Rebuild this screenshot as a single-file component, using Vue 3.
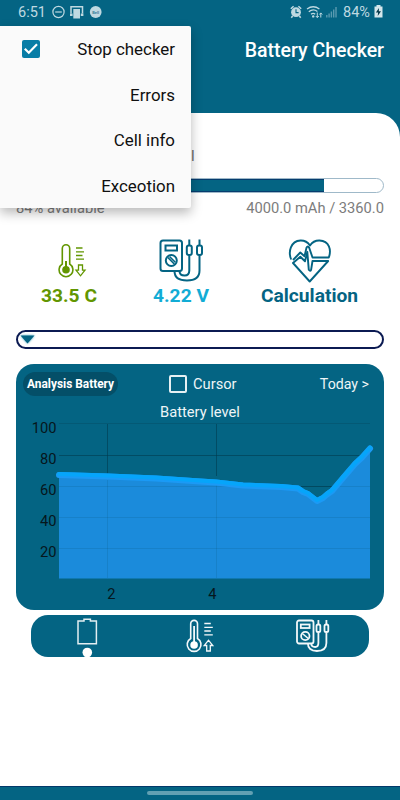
<script setup>
import { ref } from 'vue';

const stopChecker = ref(true)
const level = ref(84)

const menuItems = ['Errors', 'Cell info', 'Exceotion']

const gridRows = [
    { label: '100', y: 8.5 },
    { label: '80', y: 39.5 },
    { label: '60', y: 70.5 },
    { label: '40', y: 101.5 },
    { label: '20', y: 132.5 }
]

const gridCols = [
    { label: '2', x: 91.5, textX: 95.5 },
    { label: '4', x: 200.5, textX: 196.5 }
]

const points = '43,59 92,60.5 140,62.5 184,65.5 200,66.5 227,69.5 265,71 282,72.5 287,76 292,78 301,85 307,82 311,78.5 316,75 327,62 339,48 346,41.5 354,32.5'
</script>

<template>
    <div class="screen">
        <div class="status-bar">
            <span class="status-time">6:51</span>
            <svg class="status-left" width="52" height="14" viewBox="0 0 52 14">
                <g fill="none" stroke="#bfd9e1" stroke-width="1.2">
                    <circle cx="6.5" cy="7" r="5.6" />
                    <path d="M3.2 7h6.6" />
                </g>
                <path d="M19 8.500V1.700h11.500v6.800" fill="none" stroke="#bfd9e1" stroke-width="1.500" />
                <path d="M21.300 4h6.700v9.500h-6.700z" fill="#bfd9e1" />
                <path d="M18 8.500h2.600v2.500H18zM28.800 8.500h2.600v2.500h-2.600z" fill="#bfd9e1" />
                <circle cx="43.700" cy="7" r="5.900" fill="#bfd9e1" />
                <text x="43.700" y="8.500" text-anchor="middle" font-size="4" font-weight="700" fill="#3d8299">Bell</text>
            </svg>
            <svg class="status-right" width="50" height="14" viewBox="0 0 50 14">
                <circle cx="6" cy="7.200" r="4.900" fill="#bfd9e1" />
                <path d="M.8 3.800 3.600 1.200M8.400 1.200l2.800 2.600M2.600 11 1.300 12.800M9.400 11l1.300 1.800" stroke="#bfd9e1" stroke-width="1.500" />
                <path d="M6 4.300v3.300h2.600" fill="none" stroke="#046483" stroke-width="1.100" />
                <g fill="none" stroke="#bfd9e1" stroke-width="1.300">
                    <path d="M17 4q6.200-4.500 12.400 0M18.800 6.800q4.400-3.600 8.600-.2M21 9.300q2.200-1.700 4.200 0" />
                    <path d="M27.300 7.500v5M25.800 11l1.500 1.600 1.500-1.600M30.800 12.500V8M29.400 9.500l1.400-1.600 1.400 1.600" stroke-width="1" />
                </g>
                <circle cx="23.200" cy="11.400" r="1.200" fill="#bfd9e1" />
                <path d="M36.800 10v2.500M39.100 8.500v4M41.400 6.500v6M43.700 4.500v8M46 2v10.500" stroke="#5a9ab0" stroke-width="1.400" />
            </svg>
            <span class="status-level">{{ level }}%</span>
            <svg width="9" height="13" viewBox="0 0 9 13">
                <path d="M2.500 0h4v1.500H8.500V12.500H.5V1.500h2z" fill="#d4e6eb" />
                <path d="M5 3 1.900 7.500h2.200L3.700 11 7 6.300H4.800z" fill="#05384a" />
            </svg>
        </div>

        <div class="app-bar">Battery Checker</div>

        <div class="sheet">
            <div class="level-title">l</div>
            <div class="level-bar">
                <div class="level-fill" :style="{ width: level + '%' }"></div>
            </div>
            <div class="level-info">
                <span>{{ level }}% available</span>
                <span>4000.0 mAh / 3360.0</span>
            </div>

            <div class="metrics">
                <div class="metric temperature">
                    <svg width="44" height="46" viewBox="0 0 44 46" fill="none" stroke="currentColor">
                        <path d="M15.300 26V10.500a3.700 3.700 0 0 1 7.400 0V26a6.900 6.900 0 1 1-7.400 0z" stroke-width="1.600" />
                        <path d="M19 23v9" stroke-width="2" />
                        <circle cx="19" cy="31.800" r="3.800" fill="currentColor" stroke="none" />
                        <path d="M29 10h6.500M29 13.800h8M29 17.500h6.500M29 21.200h8" stroke-width="1.300" />
                        <path d="M31.500 27h4v5.200H38l-4.500 5.600-4.500-5.600h2.500z" stroke-width="1.300" />
                    </svg>
                    <span>33.5 C</span>
                </div>
                <div class="metric voltage">
                    <svg width="44" height="46" viewBox="0 0 44 46" fill="none" stroke="#046483" stroke-width="2">
                        <rect x="1.500" y="2.500" width="21.500" height="30.500" rx="2.500" />
                        <rect x="6.500" y="7.500" width="11.500" height="5" />
                        <circle cx="12.300" cy="22.500" r="5.500" />
                        <path d="m8.800 19.500 6.500 6.500M10.500 18.500l5.800 5.800" stroke-width="1.600" />
                        <rect x="27.800" y="7.500" width="5" height="9.500" rx="2" />
                        <rect x="38" y="7.500" width="5" height="9.500" rx="2" />
                        <path d="M30.300 1.500v6M40.500 1.500v6M30.300 17v15.500q0 5-4.700 5-5.100 0-5.100-4.500M40.500 17v15.500q0 10-12.500 10T15.500 33" />
                    </svg>
                    <span>4.22 V</span>
                </div>
                <div class="metric calculation">
                    <svg width="44" height="46" viewBox="0 0 44 46" fill="none" stroke="currentColor" stroke-width="1.900" stroke-linejoin="round">
                        <path d="M3.200 21.500C0 14 2.500 3 12.500 2.500q6-.2 9.500 5Q25.500 2.300 31.500 2.500c10 .5 12 9.500 9.300 17H24.500L21.200 9.700q-1.500-2.500-2.700 0L16.500 18.300 12.300 14.500 5 22" />
                        <path d="m5 25 7.300-6.300 4.700 4.600 2.300-9.500 1.500 18q1.400 2 2.300 0l1.400-8.800h15.700L21.700 43.500z" />
                    </svg>
                    <span>Calculation</span>
                </div>
            </div>

            <div class="slider">
                <svg width="16" height="11" viewBox="0 0 16 11">
                    <path d="M.5 1.500h14L7.500 9.500z" fill="#046483" />
                </svg>
            </div>

            <div class="chart-card">
                <div class="chart-head">
                    <div class="analysis-btn">Analysis Battery</div>
                    <div class="cursor-check">
                        <span class="empty-box"></span>
                        <span>Cursor</span>
                    </div>
                    <div class="today">Today &gt;</div>
                </div>
                <div class="chart-title">Battery level</div>
                <svg class="chart" width="368" height="190" viewBox="0 0 368 190">
                    <polygon :points="`43,162.500 ${points} 354,162.500`" fill="#1b8bdb" />
                    <g stroke="#02384a" stroke-opacity="0.55" stroke-width="1">
                        <line x1="43" x2="354" y1="7.500" y2="7.500" stroke-opacity="0.25" />
                        <line x1="43" x2="347" y1="39.500" y2="39.500" />
                        <line x1="230" x2="318" y1="70.500" y2="70.500" />
                        <line v-for="col in gridCols" :key="col.label" :x1="col.x" :x2="col.x" y1="8" y2="60" />
                    </g>
                    <g stroke="#02384a" stroke-opacity="0.12" stroke-width="1">
                        <line v-for="row in gridRows.slice(2)" :key="row.label" x1="43" x2="354" :y1="row.y" :y2="row.y" />
                        <line v-for="col in gridCols" :key="col.label" :x1="col.x" :x2="col.x" y1="64" y2="162" />
                    </g>
                    <polyline class="line-base" :points="points" />
                    <polyline class="line-top" :points="points" transform="translate(0 -1)" />
                    <g class="axis-text">
                        <text v-for="row in gridRows" :key="row.label" x="40.500" :y="row.y + 8" text-anchor="end">{{ row.label }}</text>
                        <text v-for="col in gridCols" :key="col.label" :x="col.textX" y="182.500" text-anchor="middle">{{ col.label }}</text>
                    </g>
                </svg>
            </div>

            <div class="tabs">
                <div class="tab">
                    <svg width="22" height="42" viewBox="0 0 22 42">
                        <path d="M2 6h6V4.200h6.400V6h6v22.800H2z" fill="none" stroke="#e3eef2" stroke-width="1.500" />
                        <circle cx="11.300" cy="37.500" r="4.800" fill="#fff" />
                    </svg>
                </div>
                <div class="tab">
                    <svg width="30" height="42" viewBox="0 0 30 42" fill="none" stroke="#f3f8fa">
                        <path d="M5.700 23.500V8.800a3.400 3.400 0 0 1 6.800 0v14.700a6.900 6.900 0 1 1-6.800 0z" stroke-width="1.600" />
                        <path d="M9.100 11v19" stroke-width="1.800" />
                        <circle cx="9.100" cy="30" r="3.800" fill="#fff" stroke="none" />
                        <path d="M19.300 8.500h6.500M19.300 12.300h8.500M19.300 16h6.500M19.300 19.800h8.500" stroke-width="1.300" />
                        <path d="M21.700 36v-5.500h-2.500l4.300-5.300 4.300 5.300h-2.500V36z" stroke-width="1.300" />
                    </svg>
                </div>
                <div class="tab">
                    <svg width="34" height="42" viewBox="0 0 34 42" fill="none" stroke="#f3f8fa" stroke-width="1.800">
                        <rect x="1" y="5.500" width="16.500" height="23" rx="2" />
                        <rect x="4.800" y="9.500" width="8.800" height="3.500" />
                        <circle cx="9.300" cy="21" r="4.200" />
                        <path d="m6.300 18.500 6 5" stroke-width="1.600" />
                        <rect x="20.500" y="9.500" width="3.800" height="7.500" rx="1.600" />
                        <rect x="28.500" y="9.500" width="3.800" height="7.500" rx="1.600" />
                        <path d="M22.400 5v4M30.400 5v4M22.400 17v11q0 4-3.300 4-3.800 0-3.800-3.500M30.400 17v11q0 8-9.500 8-9 0-9-7.500" />
                    </svg>
                </div>
            </div>
        </div>

        <div class="nav-bar"><span></span></div>

        <div class="menu">
            <div class="menu-item">
                <span class="checked-box">
                    <svg v-if="stopChecker" width="18" height="18" viewBox="0 0 18 18">
                        <path d="M2.800 8.800l4 4 8.200-8.500" fill="none" stroke="#fff" stroke-width="2.200" />
                    </svg>
                </span>
                <span class="menu-label">Stop checker</span>
            </div>
            <div class="menu-item" v-for="item in menuItems" :key="item">
                <span></span>
                <span class="menu-label">{{ item }}</span>
            </div>
        </div>
    </div>
</template>

<style>
body {
    margin: 0;
}
</style>

<style scoped>
.screen {
    position: relative;
    box-sizing: border-box;
    width: 400px;
    height: 800px;
    overflow: hidden;
    display: flex;
    flex-direction: column;
    background: #046483;
    font-family: Roboto, "Liberation Sans", sans-serif;
}

.screen svg {
    display: block;
    flex: none;
}

.status-bar {
    display: flex;
    align-items: center;
    height: 23px;
    padding: 0 17px 0 18px;
    color: #bfd9e1;
    font-size: 14.500px;
}

.status-time,
.status-level {
    padding-top: 1px;
}

.status-time {
    width: 34px;
}

.status-right {
    margin-left: auto;
}

.status-level {
    width: 31px;
    margin-left: 3px;
}

.app-bar {
    height: 90px;
    padding-right: 16px;
    box-sizing: border-box;
    color: #fff;
    font-size: 19.500px;
    font-weight: 500;
    line-height: 56px;
    text-align: right;
}

.sheet {
    flex: 1;
    padding: 0 16px;
    background: #fff;
    border-radius: 0 24px 0 0;
}

.level-title {
    height: 65px;
    padding-left: 175px;
    color: #6c6c6c;
    font-size: 15px;
    line-height: 87px;
}

.level-bar {
    box-sizing: border-box;
    height: 15px;
    border: 1px solid #9fb9c9;
    border-radius: 8px;
    overflow: hidden;
}

.level-fill {
    box-sizing: border-box;
    height: 100%;
    background: #046483;
    border-bottom: 1px solid #063c6e;
    border-top: 1px solid #063c6e;
}

.level-info {
    display: flex;
    justify-content: space-between;
    height: 45px;
    color: #7c7c7c;
    font-size: 14.700px;
    line-height: 30px;
}

.metrics {
    display: grid;
    grid-template-columns: 106px 118px 139px;
    height: 92px;
}

.metric {
    display: flex;
    flex-direction: column;
    align-items: center;
    font-size: 19.200px;
    font-weight: 700;
    line-height: 22px;
}

.metric svg {
    margin-bottom: 1px;
}

.temperature {
    color: #629600;
}

.voltage {
    color: #12acd5;
}

.calculation {
    color: #046483;
}

.slider {
    box-sizing: border-box;
    display: flex;
    align-items: center;
    height: 19px;
    padding-left: 2px;
    border: 2px solid #0b1a52;
    border-radius: 10px;
}

.slider svg {
    filter: drop-shadow(0 0 1px #3aa0ba);
}

.chart-card {
    height: 246px;
    margin-top: 15px;
    background: #046483;
    border-radius: 18px;
    color: #eef5f7;
    font-size: 14.700px;
}

.chart-head {
    display: flex;
    align-items: center;
    height: 39px;
    padding: 0 15px 0 7px;
}

.analysis-btn {
    width: 95px;
    height: 24px;
    border-radius: 12px;
    background: #044f68;
    color: #fff;
    font-size: 11.900px;
    font-weight: 700;
    line-height: 24px;
    text-align: center;
    white-space: nowrap;
}

.cursor-check {
    display: flex;
    align-items: center;
    gap: 6px;
    margin-left: 51px;
    line-height: 20px;
}

.empty-box {
    box-sizing: border-box;
    width: 18px;
    height: 18px;
    border: 2px solid #e6f0f3;
    border-radius: 2px;
}

.today {
    margin-left: auto;
    font-size: 14.200px;
}

.chart-title {
    height: 13px;
    line-height: 18px;
    text-align: center;
}

.line-base,
.line-top {
    fill: none;
    stroke: #1b9af5;
    stroke-width: 6;
    stroke-linecap: round;
    stroke-linejoin: round;
}

.line-top {
    stroke: #06a5fa;
    stroke-width: 4;
}

.axis-text {
    fill: #06161c;
    font-size: 14.700px;
}

.tabs {
    display: grid;
    grid-template-columns: repeat(3, 1fr);
    height: 42px;
    margin: 5px 15px 0;
    background: #046483;
    border-radius: 17px;
}

.tab {
    display: flex;
    justify-content: center;
}

.nav-bar {
    box-sizing: border-box;
    display: flex;
    justify-content: center;
    height: 14px;
    padding-top: 4px;
    border-top: 1px solid #03396a;
}

.nav-bar span {
    width: 106px;
    height: 4px;
    border-radius: 2px;
    background: #62a0b3;
}

.menu {
    position: absolute;
    left: 0;
    top: 26px;
    box-sizing: border-box;
    width: 191px;
    height: 182px;
    background: #fafafa;
    border-radius: 0 2px 2px 0;
    box-shadow: 0 5px 12px rgba(0, 0, 0, 0.28);
}

.menu-item {
    display: flex;
    align-items: center;
    justify-content: space-between;
    height: 45.500px;
    padding: 0 16px 0 22px;
    color: #101010;
    font-size: 16.900px;
}

.menu-label {
    padding-top: 1px;
}

.checked-box {
    width: 18px;
    height: 18px;
    border-radius: 2px;
    background: #087da6;
}
</style>
